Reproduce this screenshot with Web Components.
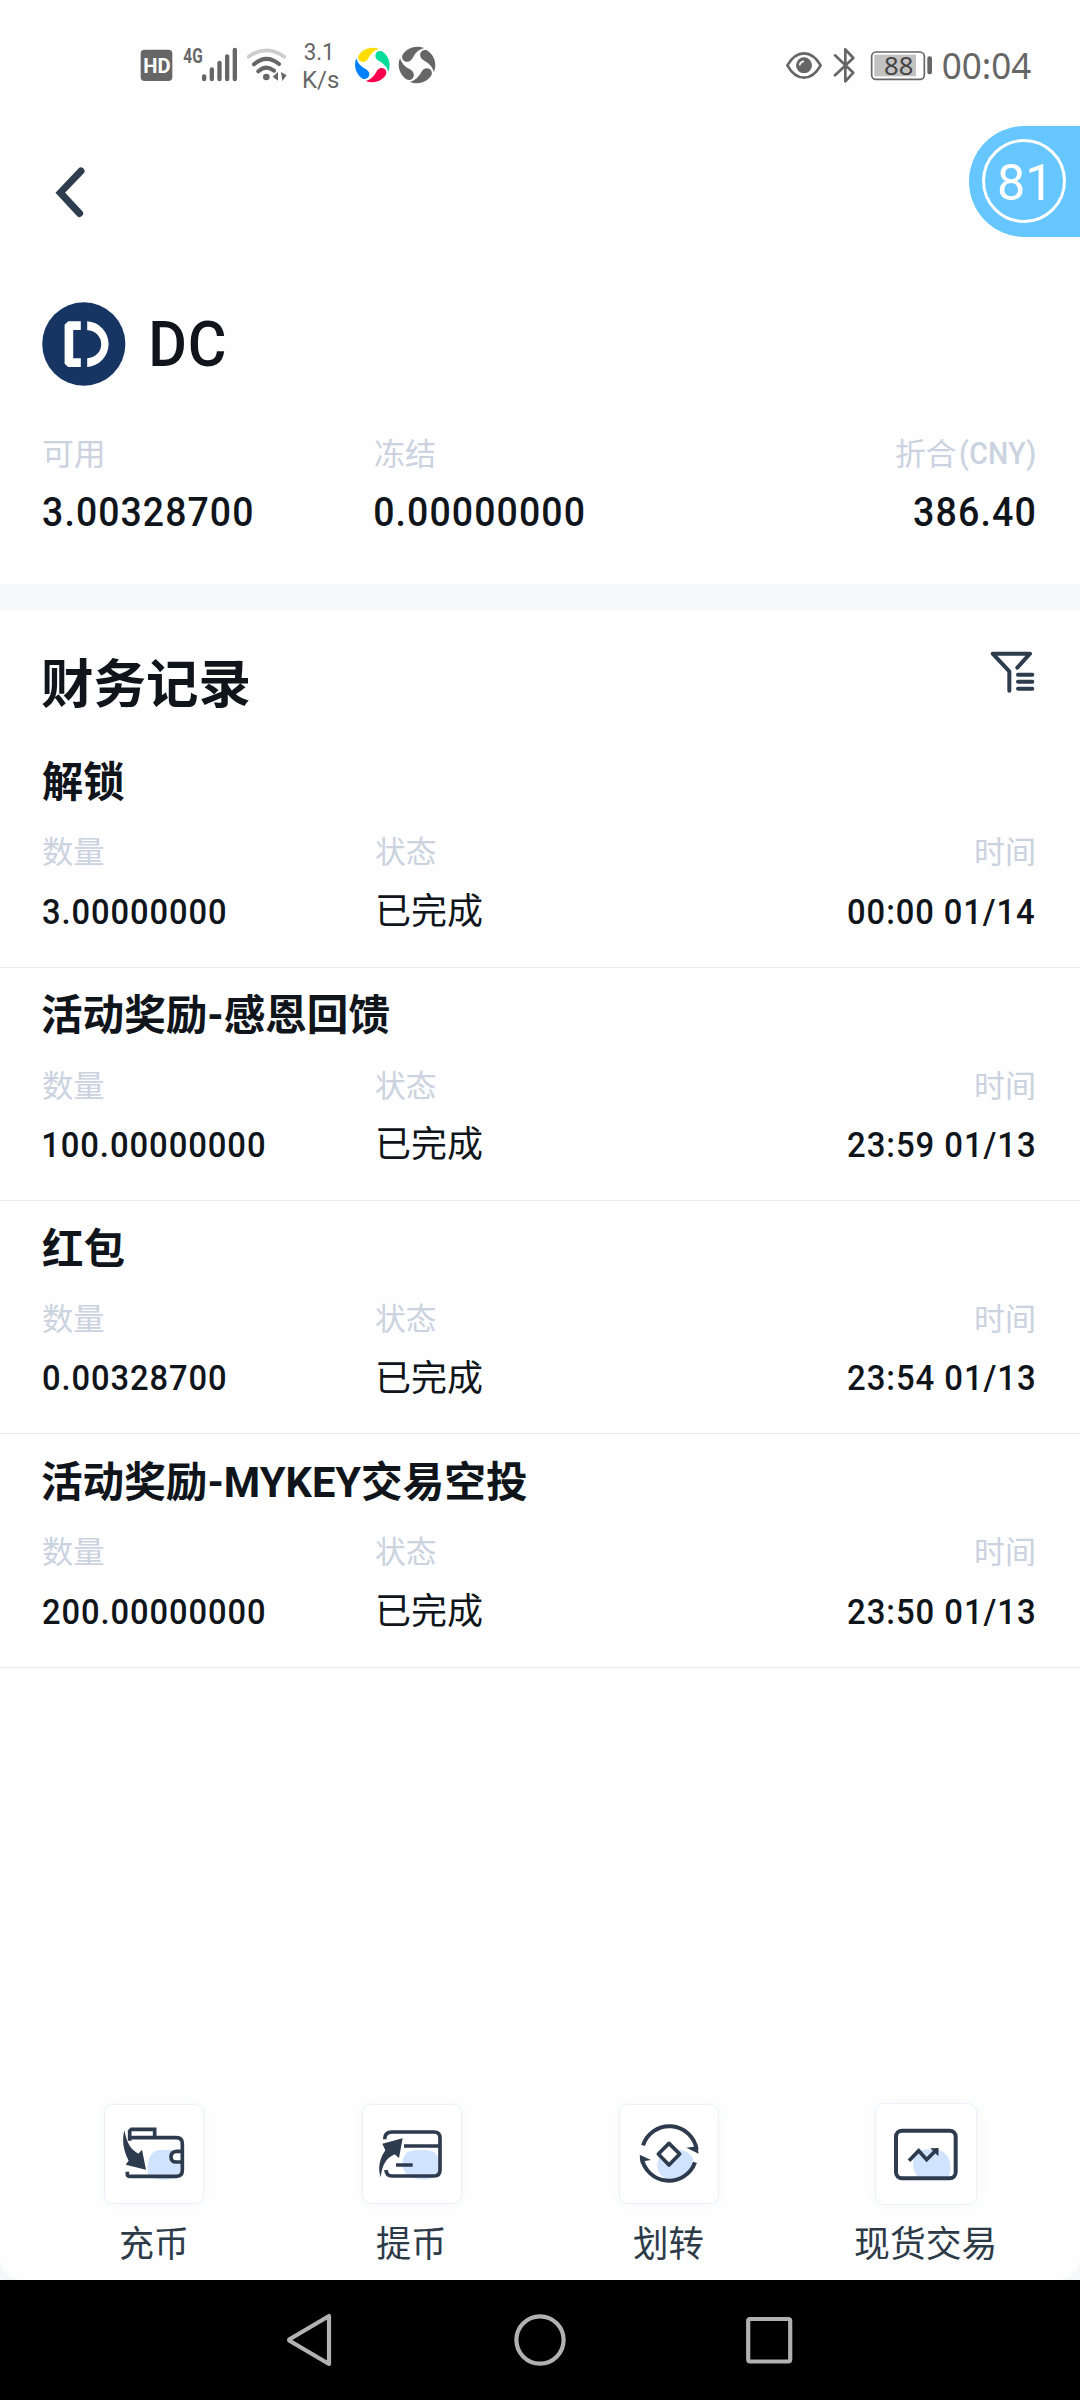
<!DOCTYPE html>
<html lang="zh-CN">
<head>
<meta charset="utf-8">
<title>DC</title>
<style>
html,body{margin:0;padding:0;background:#f5f7fa}
body{width:1080px;height:2400px;overflow:hidden;font-family:Roboto,"Noto Sans CJK SC",sans-serif;color:#0f151a}
</style>
</head>
<body>
<wallet-page></wallet-page>
<script>
const define=(name,html)=>customElements.define(name,class extends HTMLElement{
  connectedCallback(){
    if(this.shadowRoot)return;
    const t=document.createElement('template');
    t.innerHTML=typeof html==='function'?html(this):html;
    this.attachShadow({mode:'open'}).append(t.content.cloneNode(true));
  }
});

/* One line of text whose drawn width is `w` and whose box ends on the baseline. */
const pen=document.createElement('canvas').getContext('2d');
customElements.define('fit-text',class extends HTMLElement{
  connectedCallback(){
    if(this.shadowRoot)return;
    const a=n=>this.getAttribute(n), size=+a('s'), w=+a('w'), weight=a('b')||400, gap=+(a('ls')||0);
    const family='Roboto,"Noto Sans CJK SC",sans-serif';
    const text=this.textContent.trim();
    pen.font=`${weight} ${size}px ${family}`;
    const m=pen.measureText(text);
    const left=-m.actualBoundingBoxLeft, ink=m.actualBoundingBoxRight-left+gap*(text.length-1), k=w/ink;
    this.attachShadow({mode:'open'}).innerHTML=`<style>
      :host{display:block;flex:none;width:${w}px;height:${size*.6836}px;
        font:${weight} ${size}px/.6836 ${family.replace(/"/g,"'")};white-space:nowrap}
      span{display:inline-block;letter-spacing:${gap}px;transform-origin:0 50%;transform:translateX(${-left*k}px) scaleX(${k})}
    </style><span><slot></slot></span>`;
  }
});

define('status-bar',`<style>
:host{display:flex;height:80px;padding:30px 0 0 120px;color:#666}
svg{display:block;flex:none;height:80px}
.gap{flex:1}
text{font-family:Roboto,sans-serif;fill:#666}
</style>
<svg width="55" viewBox="0 0 165 240"><rect x="62" y="59" width="95" height="94" rx="12" fill="#666"/><text x="70" y="128" textLength="82" lengthAdjust="spacingAndGlyphs" style="font-size:60px;font-weight:700;fill:#fff">HD</text></svg>
<svg width="66.67" viewBox="165 0 200 240"><text x="190" y="98" textLength="58" lengthAdjust="spacingAndGlyphs" style="font-size:60px;font-weight:700">4G</text>
<g stroke="#666" stroke-width="13" stroke-linecap="round"><path d="M252.500 139v8M275.500 118v29M298.500 99v48M321.500 79v68M344.500 60v87"/></g></svg>
<svg width="51.67" viewBox="365 0 155 240" fill="none" stroke-linecap="round" stroke-width="11"><path d="M385 80Q438 42 492 80" stroke="#ccc"/><path d="M401 103Q438 71 476 102M414 124Q437 103 461 122" stroke="#666" stroke-width="12"/><circle cx="438" cy="141" r="10" fill="#666"/><path d="M473 126v26l-16-12zM482 126l17 10-13 17z" fill="#666"/></svg>
<svg width="56.67" viewBox="520 0 170 240"><text x="552" y="91" textLength="93" lengthAdjust="spacingAndGlyphs" style="font-size:72px">3.1</text><text x="547" y="174" textLength="112" lengthAdjust="spacingAndGlyphs" style="font-size:72px">K/s</text></svg>
<svg width="100" viewBox="690 0 300 240"><defs><path id="p" d="M-41-29A50 50 0 0 1 20-48C5-44-4-34-10-24C-15-14-20-9-28-9C-38-9-45-18-41-29Z"/></defs>
<g transform="translate(757 105)"><use href="#p" fill="#fd0"/><use href="#p" transform="rotate(90)" fill="#00dc9a"/><use href="#p" transform="rotate(180)" fill="#f8004e"/><use href="#p" transform="rotate(270)" fill="#0080ff"/></g>
<g transform="translate(891 105) scale(1.06)" fill="#666"><use href="#p"/><use href="#p" transform="rotate(90)"/><use href="#p" transform="rotate(180)"/><use href="#p" transform="rotate(270)"/></g></svg>
<div class="gap"></div>
<svg width="56" viewBox="0 0 168 240" fill="none" stroke="#666" stroke-width="8"><path d="M52 106Q73 70 102 70T152 106Q131 143 102 143T52 106Z" stroke-linejoin="round"/><circle cx="102" cy="106" r="24" fill="#666" stroke="none"/><path d="M89 106Q90 95 102 94" stroke="#fff" stroke-width="5"/></svg>
<svg width="34.67" viewBox="168 0 104 240" fill="none" stroke="#666" stroke-width="8" stroke-linejoin="round" stroke-linecap="round"><path d="M195 76L250 128L226 154V58L250 84L195 136"/></svg>
<svg width="73.33" viewBox="272 0 220 240"><rect x="304" y="66" width="158" height="82" rx="13" fill="none" stroke="#666" stroke-width="5"/><rect x="312" y="74" width="125" height="65" fill="#c2c2c2"/><rect x="471" y="79" width="14" height="54" rx="6" fill="#666"/><text x="341" y="134" textLength="88" lengthAdjust="spacingAndGlyphs" style="font-size:77px;fill:#444;font-family:'Noto Sans',sans-serif">88</text></svg>
<svg width="146" viewBox="492 0 438 240"><text x="515" y="147" textLength="269" lengthAdjust="spacingAndGlyphs" style="font-size:107px;font-family:'Noto Sans',sans-serif">00:04</text></svg>`);

define('nav-header',`<style>:host{display:block;height:192px;padding-left:50px;box-sizing:border-box}svg{display:block}</style>
<svg width="40" height="130" viewBox="50 110 40 130" fill="none" stroke="#2e3d4d" stroke-width="7" stroke-linecap="round"><path d="M81 171L60.300 192.700L79.600 213.500"/></svg>`);

define('timer-badge',`<style>
:host{position:absolute;right:0;top:126px;width:111px;height:111px;border-radius:56px 0 0 56px;background:#66c6ff;color:#fff}
div{box-sizing:border-box;margin:13px 0 0 13px;width:84px;height:84px;border:3px solid #fff;border-radius:50%;display:flex;align-items:flex-end;padding:0 0 19.500px 14px}
</style><div><fit-text s="50" w="44.500">81</fit-text></div>`);

define('asset-summary',`<style>
:host{display:block;height:282px}
.name{display:flex;align-items:flex-end;height:84px;padding-left:41.500px}
.name svg{display:block}
.name fit-text{margin:0 0 20px 26px}
.row{display:flex;align-items:flex-end;padding:0 45.500px 0 42px}
.row>div{display:flex;align-items:flex-end}
.a,.b{width:333px}.c{flex:1;justify-content:flex-end}
.l{height:79.500px;color:#cad3df}.v{height:60.500px}
.a{padding-left:.5px;box-sizing:border-box}.b{width:300px}
</style>
<div class="name"><svg width="84" height="84" viewBox="41.800 301.800 84 84"><ellipse cx="83.600" cy="343.800" rx="41.600" ry="41.800" fill="#173563"/><g fill="#fff"><path d="M68 321H80.600V329.800H73V358H80.600V366.800H68L64.400 363.500V324.500Z"/><path d="M87 321A22.900 22.900 0 0 1 87 366.700V358A14 14 0 0 0 87 330Z"/></g></svg><fit-text s="63" w="72.500" b="500" ls="1">DC</fit-text></div>
<div class="row l"><div class="a"><fit-text s="31" w="59.500">可用</fit-text></div><div class="b"><fit-text s="31" w="60">冻结</fit-text></div><div class="c"><fit-text s="31" w="60.500">折合</fit-text><fit-text s="31" w="74.500" b="500" ls=".3" style="margin:0 0 1px 4px">(CNY)</fit-text></div></div>
<div class="row v"><div class="a"><fit-text s="41.500" w="209" b="500" ls="1.200">3.00328700</fit-text></div><div class="b"><fit-text s="41.500" w="208.500" b="500" ls="1.200">0.00000000</fit-text></div><div class="c"><fit-text s="41.500" w="120.500" b="500" ls="1.200">386.40</fit-text></div></div>`);

define('section-title',`<style>
:host{display:block;border-top:26px solid #f6f8fa}
div{display:flex;justify-content:space-between;align-items:flex-end;height:94px;padding:0 45px 0 41.500px}
svg{display:block;margin-bottom:10px}
</style><div><fit-text s="52.500" w="207.500" b="700">财务记录</fit-text>
<svg width="44.670" height="42.670" viewBox="570 64 134 128" fill="none" stroke="#2e3d4d" stroke-width="12" stroke-linecap="round" stroke-linejoin="round"><path d="M652 114L690 72H578L628 125V183M654 135H697M654 156H697M654 177H697"/></svg></div>`);

define('record-item',e=>`<style>
:host{display:block;box-sizing:border-box;height:233.330px;border-bottom:1.400px solid #e7ebf0}
div{display:flex;align-items:flex-end;padding:0 45.500px 0 42.600px}
.t{height:63.300px;padding-left:41.500px}.l{height:65.700px;color:#cad3df}.v{height:60.300px}
span{display:flex;align-items:flex-end;width:332px}span.m{width:300px}.r{flex:1;justify-content:flex-end}
</style>
<div class="t"><fit-text s="42" b="700" w="${e.getAttribute('tw')}">${e.getAttribute('name')}</fit-text></div>
<div class="l"><span><fit-text s="31" w="60.500">数量</fit-text></span><span class="m"><fit-text s="31" w="60.500">状态</fit-text></span><span class="r"><fit-text s="31" w="58" style="margin-right:1px">时间</fit-text></span></div>
<div class="v"><span><fit-text s="35.500" b="500" ls="1" w="${e.getAttribute('aw')}">${e.getAttribute('amount')}</fit-text></span><span class="m"><fit-text s="36" w="104" style="margin:0 0 -.8px 3px">已完成</fit-text></span><span class="r"><fit-text s="35.500" b="500" ls="1" w="186.500">${e.getAttribute('time')}</fit-text></span></div>`);

define('action-button',`<style>
:host{display:flex;flex-direction:column;align-items:center;color:#2d3a48;height:177px;justify-content:flex-end}
.card{box-sizing:border-box;width:98px;height:98px;border-radius:8px;background:#fff;box-shadow:0 0 0 1px #ebf0f6,0 1px 10px 1px #e8edf566}
:host([large]) .card{width:100px;height:100px;margin-bottom:-1px}
.label{display:flex;align-items:flex-end;height:55px;margin-bottom:22.500px}
::slotted(svg){display:block;width:100%;height:100%}
</style><div class="card"><slot name="icon"></slot></div><div class="label"><slot></slot></div>`);

define('action-bar',`<style>
:host{display:grid;grid-template-columns:258.200px 258px 257px 256px;padding-left:24.600px;margin-top:auto}
svg{fill:none;stroke:#2e3b4e;stroke-width:11}
.blob{fill:#d0e3ff;stroke:none}.solid{fill:#2e3b4e;stroke:none}
</style>
<action-button><svg slot="icon" viewBox="74 73 294 294"><path class="blob" d="M204 286C196 242 211 208 239 208H276C266 224 273 246 301 249V283Q281 297 254 297T204 286Z"/><path d="M148 180V151L153 146H223V171M148 171H288Q306 171 306 189V269Q306 287 288 287H147Q141 287 141 281V273M302 212H289Q272 213 272 229T289 244H302"/><path class="solid" d="M132 149C126 174 126 205 145 240L136 252L197 267L185 207L174 219C153 208 140 190 132 149Z"/></svg><fit-text s="36" w="67">充币</fit-text></action-button>
<action-button><svg slot="icon" viewBox="850 73 292 294"><path class="blob" d="M978 218C989 205 1053 202 1068 219Q1078 230 1075 258V283Q1045 302 1009 294C978 289 962 264 968 237Z"/><path d="M914 176Q914 154 936 154H1062Q1080 154 1080 172V268Q1080 286 1062 286H936Q919 286 918 268M972 196H1079M948 253H998"/><path class="solid" d="M902 290C893 263 898 235 916 209L907 189L968 173L957 232L944 221C917 233 907 253 902 290Z"/></svg><fit-text s="36" w="67.500" style="margin-right:1.500px">提币</fit-text></action-button>
<action-button><svg slot="icon" viewBox="61 73 294 294"><path class="blob" d="M180 228L208 256L246 219L236 207Q266 208 280 233Q284 249 266 279Q228 302 205 295C179 289 163 260 180 228Z"/><path d="M130 194A83 83 0 0 1 291 207M286 245A83 83 0 0 1 126 231" stroke-width="12"/><path class="solid" d="M260 201L282 198L292 190L297 219ZM120 222L154 238L132 242L124 250Z"/><path d="M208 188L240 220L208 253L176 220Z" stroke-linejoin="round"/></svg><fit-text s="36" w="69" style="margin-right:1px">划转</fit-text></action-button>
<action-button large><svg slot="icon" viewBox="827 70 300 300"><path class="blob" d="M954 212C969 204 1021 201 1036 220C1052 236 1054 263 1046 287H951C930 257 937 229 954 212Z"/><rect x="887" y="150" width="179" height="143" rx="18" stroke-width="12"/><path d="M926 240L955 210L979 237L1005 211"/><path class="solid" d="M990 203L1015 202L1014 227Z"/></svg><fit-text s="36" w="139.500" style="margin-right:2px">现货交易</fit-text></action-button>`);

define('system-nav',`<style>:host{display:flex;height:120px;background:#000;flex:none}svg{display:block}</style>
<svg width="1080" height="120" viewBox="0 2280 1080 120" fill="none" stroke="#b1b1b1" stroke-width="4.200" stroke-linejoin="round"><path d="M329 2316V2364L290 2341Q288 2340 290 2339Z"/><circle cx="540" cy="2340" r="23.600"/><rect x="748.200" y="2319" width="42" height="42.500" rx="2"/></svg>`);

define('wallet-page',`<style>
:host{display:flex;flex-direction:column;position:relative;width:1080px;height:2400px}
main{display:flex;flex-direction:column;height:2280px;background:#fefefe;border-radius:0 0 22px 22px}
record-item:first-of-type{margin-top:30.500px}
</style>
<main>
<status-bar></status-bar><nav-header></nav-header><asset-summary></asset-summary><section-title></section-title>
<record-item name="解锁" tw="82.500" amount="3.00000000" aw="182.500" time="00:00 01/14"></record-item>
<record-item name="活动奖励-感恩回馈" tw="347" amount="100.00000000" aw="221.500" time="23:59 01/13"></record-item>
<record-item name="红包" tw="82" amount="0.00328700" aw="182.500" time="23:54 01/13"></record-item>
<record-item name="活动奖励-MYKEY交易空投" tw="484.500" amount="200.00000000" aw="221.500" time="23:50 01/13"></record-item>
<action-bar></action-bar>
</main>
<system-nav></system-nav><timer-badge></timer-badge>`);
</script>
</body>
</html>
